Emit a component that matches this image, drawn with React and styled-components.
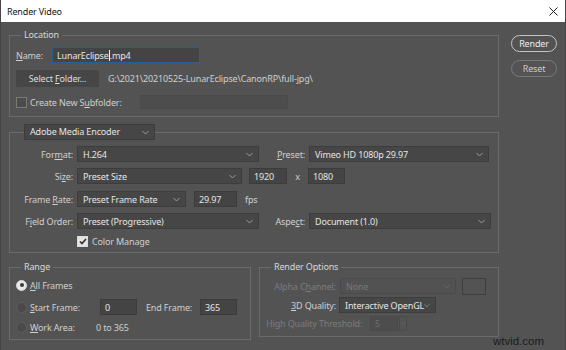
import React from "react";
import styled, { createGlobalStyle } from "styled-components";

const GlobalStyle = createGlobalStyle`
  html, body { margin: 0; padding: 0; background: #535353; }
  body { font-family: "Noto Sans", "Open Sans", sans-serif; font-size: 9px; letter-spacing: -0.15px; }
  * { box-sizing: border-box; }
`;

const Window = styled.div`
  position: relative;
  width: 566px;
  height: 350px;
  overflow: hidden;
  background: #535353;
  color: #d2d2d2;
  border-left: 1px solid #454545;
  border-right: 1px solid #454545;
`;

const TitleBar = styled.div`
  height: 22px;
  background: #ffffff;
  color: #111;
  display: flex;
  align-items: center;
  justify-content: space-between;
  padding: 0 7px 0 6px;
  font-size: 9px;
`;

const Body = styled.div`
  display: flex;
  gap: 12px;
  padding: 6px 0 0 8px;
`;

const Main = styled.div`
  width: 490px;
  display: flex;
  flex-direction: column;
`;

const Side = styled.div`
  width: 46px;
  display: flex;
  flex-direction: column;
  gap: 8px;
  padding-top: 7px;
`;

const PillButton = styled.div`
  height: 17px;
  border-radius: 9px;
  border: 1px solid ${(p) => (p.$primary ? "#c4c4c4" : "#7a7a7a")};
  color: ${(p) => (p.$primary ? "#ececec" : "#cbcbcb")};
  display: flex;
  align-items: center;
  justify-content: center;
`;

const Group = styled.fieldset`
  margin: ${(p) => p.$mt || 0}px 0 0;
  padding: 0 6px ${(p) => p.$pb || 0}px;
  border: 1px solid #6a6a6a;
  min-width: 0;
  width: ${(p) => (p.$w ? `${p.$w}px` : "auto")};
  align-self: ${(p) => (p.$w ? "flex-start" : "stretch")};
`;

const Legend = styled.legend`
  margin-left: ${(p) => p.$ml ?? 5}px;
  padding: ${(p) => (p.$bare ? "0" : "0 3px")};
  line-height: 14px;
  color: #d8d8d8;
`;

const Row = styled.div`
  display: flex;
  align-items: center;
  height: ${(p) => p.$h || 16}px;
  margin-top: ${(p) => p.$mt || 0}px;
  white-space: nowrap;
`;

const Label = styled.span`
  flex: none;
  display: flex;
  justify-content: ${(p) => (p.$align === "right" ? "flex-end" : p.$align === "center" ? "center" : "flex-start")};
  width: ${(p) => (p.$w ? `${p.$w}px` : "auto")};
  margin-left: ${(p) => p.$ml || 0}px;
  margin-right: ${(p) => p.$mr || 0}px;
  color: ${(p) => (p.$off ? "#7b7b7b" : "#cfcfcf")};
  white-space: nowrap;
`;

const U = styled.u`
  text-decoration: underline;
  text-underline-offset: 1px;
`;

const TextField = styled.div`
  flex: none;
  display: flex;
  align-items: center;
  width: ${(p) => p.$w}px;
  height: ${(p) => p.$h || 16}px;
  margin-left: ${(p) => p.$ml || 0}px;
  padding-left: 4px;
  background: ${(p) => (p.$off ? "#4d4d4d" : "#444444")};
  border: 1px solid ${(p) => (p.$focus ? "#2b5f93" : p.$off ? "#4a4a4a" : "#3c3c3c")};
  color: ${(p) => (p.$dim ? "#6f6f6f" : "#e4e4e4")};
`;

const Caret = styled.span`
  display: inline-block;
  width: 1px;
  height: 11px;
  background: #f0f0f0;
`;

const SelectBox = styled.div`
  flex: none;
  display: flex;
  align-items: center;
  justify-content: space-between;
  width: ${(p) => p.$w}px;
  height: 16px;
  margin-left: ${(p) => p.$ml || 0}px;
  padding: 0 5px 0 5px;
  background: ${(p) => (p.$off ? "#525252" : "#464646")};
  border: 1px solid ${(p) => (p.$off ? "#4a4a4a" : "#3d3d3d")};
  color: ${(p) => (p.$off ? "#777" : "#e4e4e4")};
`;

const FolderButton = styled.div`
  flex: none;
  width: 83px;
  height: 17px;
  background: #464646;
  color: #dedede;
  display: flex;
  align-items: center;
  justify-content: center;
`;

const PathText = styled.span`
  margin-left: 9px;
  color: #d0d0d0;
`;

const Check = styled.span`
  flex: none;
  width: 11px;
  height: 11px;
  margin-right: ${(p) => p.$mr || 3}px;
  border: 1px solid ${(p) => (p.$on ? "#dcdcdc" : "#7a7a7a")};
  background: ${(p) => (p.$on ? "#e4e4e4" : "#4c4c4c")};
  display: flex;
  align-items: center;
  justify-content: center;
`;

const Radio = styled.span`
  flex: none;
  width: 11px;
  height: 11px;
  margin-right: 3px;
  border-radius: 50%;
  border: 1px solid ${(p) => (p.$on ? "#d8d8d8" : "#5e5e5e")};
  background: ${(p) => (p.$on ? "#e8e8e8" : "#4a4a4a")};
  display: flex;
  align-items: center;
  justify-content: center;
  &::after {
    content: "";
    width: 4px;
    height: 4px;
    border-radius: 50%;
    background: ${(p) => (p.$on ? "#3a3a3a" : "transparent")};
  }
`;

const Swatch = styled.div`
  flex: none;
  width: 24px;
  height: 17px;
  margin-left: 6px;
  border: 1px solid #3e3e3e;
  background: #535353;
`;

const Spin = styled.div`
  flex: none;
  width: 8px;
  height: 15px;
  margin-left: 1px;
  border: 1px solid #4a4a4a;
  display: flex;
  align-items: center;
  justify-content: center;
`;

const BottomRow = styled.div`
  display: flex;
  gap: 8px;
  margin-top: 7px;
`;

const Watermark = styled.div`
  position: absolute;
  right: 21px;
  bottom: 3px;
  font-family: "Liberation Sans", Arial, sans-serif;
  font-size: 11.5px;
  letter-spacing: 0;
  color: #1c1c1c;
`;

const Chevron = ({ off }) => (
  <svg width="7" height="5" viewBox="0 0 7 5">
    <path d="M0.5 1 L3.5 4 L6.5 1" fill="none" stroke={off ? "#666" : "#9a9a9a"} strokeWidth="1" />
  </svg>
);

const Select = ({ w, ml, off, children }) => (
  <SelectBox $w={w} $ml={ml} $off={off}>
    <span>{children}</span>
    <Chevron off={off} />
  </SelectBox>
);

const Tick = () => (
  <svg width="8" height="7" viewBox="0 0 8 7">
    <path d="M1 3.5 L3 5.5 L7 1" fill="none" stroke="#2e2e2e" strokeWidth="1.6" />
  </svg>
);

export default function App() {
  return (
    <>
      <GlobalStyle />
      <Window>
        <TitleBar>
          <span>Render Video</span>
          <svg width="9" height="9" viewBox="0 0 9 9">
            <path d="M0.5 0.5 L8.5 8.5 M8.5 0.5 L0.5 8.5" stroke="#222" strokeWidth="1" />
          </svg>
        </TitleBar>

        <Body>
          <Main>
            <Group $pb={7}>
              <Legend>Location</Legend>
              <Row $mt={5}>
                <Label $w={36}>
                  <span><U>N</U>ame:</span>
                </Label>
                <TextField $w={148} $focus>
                  LunarEclipse<Caret />.mp4
                </TextField>
              </Row>
              <Row $mt={7} $h={17}>
                <FolderButton>
                  <span>Select <U>F</U>older...</span>
                </FolderButton>
                <PathText>G:\2021\20210525-LunarEclipse\CanonRP\full-jpg\</PathText>
              </Row>
              <Row $mt={8} $h={14}>
                <Check />
                <Label $w={110}>
                  <span>Create New S<U>u</U>bfolder:</span>
                </Label>
                <TextField $w={148} $h={14} $off />
              </Row>
            </Group>

            <Group $mt={7} $pb={4}>
              <Legend $ml={8} $bare>
                <Select w={131}>Adobe Media Encoder</Select>
              </Legend>
              <Row $mt={6}>
                <Label $w={57} $mr={4} $align="right">
                  <span>For<U>m</U>at:</span>
                </Label>
                <Select w={182}>H.264</Select>
                <Label $w={46} $mr={4} $align="right">
                  <span><U>P</U>reset:</span>
                </Label>
                <Select w={180}>Vimeo HD 1080p 29.97</Select>
              </Row>
              <Row $mt={6}>
                <Label $w={57} $mr={4} $align="right">
                  <span>Si<U>z</U>e:</span>
                </Label>
                <Select w={165}>Preset Size</Select>
                <TextField $w={38} $ml={7}>1920</TextField>
                <Label $w={21} $align="center">x</Label>
                <TextField $w={37}>1080</TextField>
              </Row>
              <Row $mt={7}>
                <Label $w={57} $mr={4} $align="right">
                  <span>Frame <U>R</U>ate:</span>
                </Label>
                <Select w={109}>Preset Frame Rate</Select>
                <TextField $w={43} $ml={8}>29.97</TextField>
                <Label $ml={8}>fps</Label>
              </Row>
              <Row $mt={6}>
                <Label $w={57} $mr={4} $align="right">
                  <span>F<U>i</U>eld Order:</span>
                </Label>
                <Select w={182}>Preset (Progressive)</Select>
                <Label $w={46} $mr={4} $align="right">
                  <span>Aspe<U>c</U>t:</span>
                </Label>
                <Select w={182}>Document (1.0)</Select>
              </Row>
              <Row $mt={6} $h={13}>
                <Label $w={61} />
                <Check $on $mr={4}>
                  <Tick />
                </Check>
                <Label>
                  <span>Color Mana<U>g</U>e</span>
                </Label>
              </Row>
            </Group>

            <BottomRow>
              <Group $w={242} $pb={4}>
                <Legend>Range</Legend>
                <Row $mt={3}>
                  <Radio $on />
                  <Label>
                    <span><U>A</U>ll Frames</span>
                  </Label>
                </Row>
                <Row $mt={6}>
                  <Radio />
                  <Label $w={70}>
                    <span><U>S</U>tart Frame:</span>
                  </Label>
                  <TextField $w={37}>0</TextField>
                  <Label $w={54} $ml={9}>End Frame:</Label>
                  <TextField $w={37}>365</TextField>
                </Row>
                <Row $mt={4}>
                  <Radio />
                  <Label $w={66}>
                    <span><U>W</U>ork Area:</span>
                  </Label>
                  <Label>0 to 365</Label>
                </Row>
              </Group>

              <Group $w={240} $pb={5}>
                <Legend>Render Options</Legend>
                <Row $mt={4}>
                  <Label $w={70} $mr={4} $align="right" $off>
                    <span>Alpha C<U>h</U>annel:</span>
                  </Label>
                  <Select w={116} off>None</Select>
                  <Swatch />
                </Row>
                <Row $mt={3}>
                  <Label $w={70} $mr={3} $align="right">
                    <span><U>3</U>D Quality:</span>
                  </Label>
                  <Select w={97}>Interactive OpenGL</Select>
                </Row>
                <Row $mt={3} $h={15}>
                  <Label $w={104} $off>High Quality Threshold:</Label>
                  <TextField $w={28} $h={15} $off $dim>5</TextField>
                  <Spin>
                    <Chevron off />
                  </Spin>
                </Row>
              </Group>
            </BottomRow>
          </Main>

          <Side>
            <PillButton $primary>Render</PillButton>
            <PillButton>Reset</PillButton>
          </Side>
        </Body>

        <Watermark>wtvid.com</Watermark>
      </Window>
    </>
  );
}
